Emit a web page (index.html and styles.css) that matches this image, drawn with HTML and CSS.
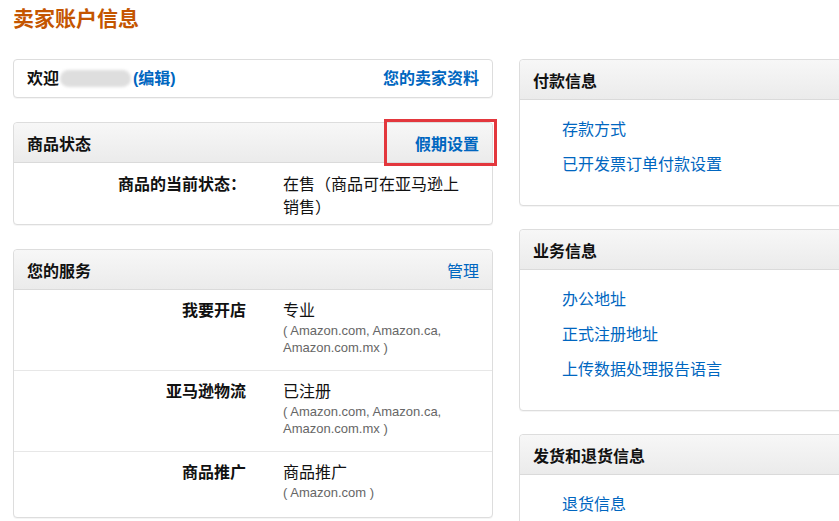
FILE: index.html
```html
<!DOCTYPE html>
<html lang="zh-CN">
<head>
<meta charset="utf-8">
<title>卖家账户信息</title>
<link rel="stylesheet" href="styles.css">
</head>
<body>
<div class="page">
  <h1 class="title">卖家账户信息</h1>
  <div class="columns">
    <div class="col">
      <div class="box welcome">
        <span class="welcome-text">欢迎<span class="blurred"></span><a class="link bold" href="#">(编辑)</a></span>
        <a class="link bold" href="#">您的卖家资料</a>
      </div>

      <div class="box">
        <div class="box-head">
          <span class="head-title">商品状态</span>
          <a class="link bold highlight" href="#">假期设置</a>
        </div>
        <div class="row status-row">
          <div class="label">商品的当前状态：</div>
          <div class="value">在售（商品可在亚马逊上销售）</div>
        </div>
      </div>

      <div class="box">
        <div class="box-head">
          <span class="head-title">您的服务</span>
          <a class="link" href="#">管理</a>
        </div>
        <div class="row svc-row">
          <div class="label">我要开店</div>
          <div class="value">专业<div class="sub">( Amazon.com, Amazon.ca, Amazon.com.mx )</div></div>
        </div>
        <div class="row svc-row">
          <div class="label">亚马逊物流</div>
          <div class="value">已注册<div class="sub">( Amazon.com, Amazon.ca, Amazon.com.mx )</div></div>
        </div>
        <div class="row svc-row last">
          <div class="label">商品推广</div>
          <div class="value">商品推广<div class="sub">( Amazon.com )</div></div>
        </div>
      </div>
    </div>

    <div class="col right">
      <div class="box">
        <div class="box-head"><span class="head-title">付款信息</span></div>
        <ul class="links">
          <li><a class="link" href="#">存款方式</a></li>
          <li><a class="link" href="#">已开发票订单付款设置</a></li>
        </ul>
      </div>
      <div class="box">
        <div class="box-head"><span class="head-title">业务信息</span></div>
        <ul class="links">
          <li><a class="link" href="#">办公地址</a></li>
          <li><a class="link" href="#">正式注册地址</a></li>
          <li><a class="link" href="#">上传数据处理报告语言</a></li>
        </ul>
      </div>
      <div class="box">
        <div class="box-head"><span class="head-title">发货和退货信息</span></div>
        <ul class="links">
          <li><a class="link" href="#">退货信息</a></li>
        </ul>
      </div>
    </div>
  </div>
</div>
</body>
</html>
```
FILE: styles.css
```css
html, body {
  margin: 0;
  padding: 0;
  background: #fff;
}
body {
  font-family: "Liberation Sans", "Noto Sans CJK SC", sans-serif;
  color: #111;
  font-size: 16px;
  overflow: hidden;
}
.page {
  padding: 7px 0 0 13px;
  width: 1200px;
}
.title {
  margin: 0;
  font-size: 21px;
  line-height: 24px;
  font-weight: bold;
  color: #c45500;
}
.columns {
  display: flex;
  gap: 26px;
  margin-top: 28px;
  align-items: flex-start;
}
.col {
  width: 480px;
  flex-shrink: 0;
  display: flex;
  flex-direction: column;
  gap: 24px;
}
.col.right {
  gap: 23px;
}
.box {
  border: 1px solid #ddd;
  border-radius: 4px;
  background: #fff;
  box-shadow: 0 1px 0 rgba(0,0,0,0.04);
}
.link {
  color: #0066c0;
  text-decoration: none;
}
.bold {
  font-weight: bold;
}
.welcome {
  height: 37px;
  padding: 0 13px;
  display: flex;
  align-items: center;
  justify-content: space-between;
  font-weight: bold;
  line-height: 37px;
}
.welcome-text {
  display: flex;
  align-items: center;
}
.blurred {
  display: inline-block;
  width: 71px;
  height: 17px;
  margin: 0 2px 0 1px;
  border-radius: 9px;
  background: #dedede;
  filter: blur(1.5px);
}
.box-head {
  height: 39px;
  padding: 0 13px;
  display: flex;
  align-items: center;
  justify-content: space-between;
  background: linear-gradient(#f7f7f7, #ebebeb);
  border-bottom: 1px solid #dadada;
  border-radius: 4px 4px 0 0;
}
.head-title {
  font-weight: bold;
  color: #111;
}
.highlight {
  position: relative;
}
.highlight::after {
  content: "";
  position: absolute;
  left: -31px;
  right: -18px;
  top: -12px;
  bottom: -11px;
  border: 3px solid #e3373d;
}
.row {
  display: grid;
  grid-template-columns: 232px 189px;
  column-gap: 37px;
}
.label {
  text-align: right;
  font-weight: bold;
  color: #111;
}
.value {
  color: #111;
}
.status-row {
  padding: 10px 0 5px;
  line-height: 23px;
}
.svc-row {
  padding: 10px 0 14px;
  line-height: 22px;
  border-bottom: 1px solid #e7e7e7;
}
.svc-row.last {
  border-bottom: 0;
  padding-bottom: 16px;
}
.sub {
  font-size: 13px;
  line-height: 17px;
  color: #666;
}
.links {
  list-style: none;
  margin: 0;
  padding: 12px 0 23px 42px;
}
.links li {
  line-height: 35px;
  height: 35px;
}
```
